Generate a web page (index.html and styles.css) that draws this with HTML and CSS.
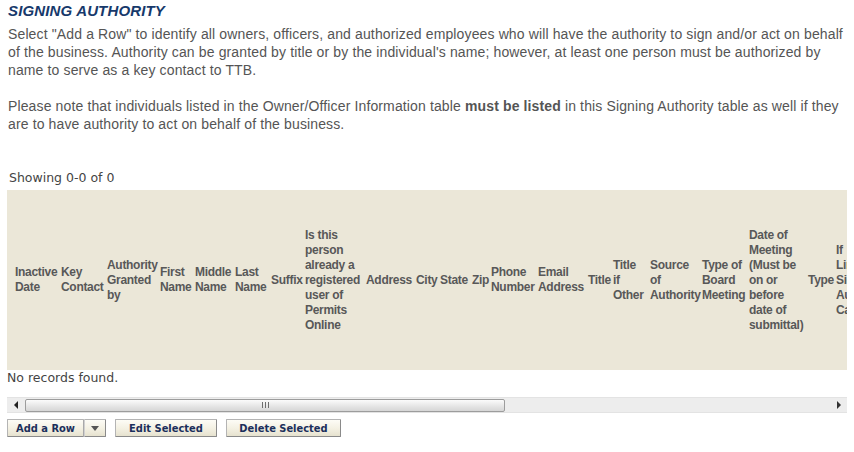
FILE: index.html
```html
<!DOCTYPE html>
<html lang="en">
<head>
<meta charset="utf-8">
<title>Signing Authority</title>
<link rel="stylesheet" href="styles.css">
</head>
<body>
<h2 class="title">SIGNING AUTHORITY</h2>
<p class="intro">Select "Add a Row" to identify all owners, officers, and authorized employees who will have the authority to sign and/or act on behalf of the business. Authority can be granted by title or by the individual's name; however, at least one person must be authorized by name to serve as a key contact to TTB.</p>
<p class="intro second">Please note that individuals listed in the Owner/Officer Information table <strong>must be listed</strong> in this Signing Authority table as well if they are to have authority to act on behalf of the business.</p>

<div class="grid">
  <div class="pager">Showing 0-0 of 0</div>
  <div class="grid-head">
    <table class="head-table">
      <colgroup>
        <col class="w46"><col class="w46"><col class="w53"><col class="w35"><col class="w40"><col class="w36"><col class="w34"><col class="w61"><col class="w50"><col class="w24"><col class="w32"><col class="w19"><col class="w47"><col class="w50"><col class="w25"><col class="w37"><col class="w52"><col class="w47"><col class="w59"><col class="w28"><col class="w80"><col class="w80">
      </colgroup>
      <tr>
        <th>Inactive<br>Date</th>
        <th>Key<br>Contact</th>
        <th>Authority<br>Granted<br>by</th>
        <th>First<br>Name</th>
        <th>Middle<br>Name</th>
        <th>Last<br>Name</th>
        <th>Suffix</th>
        <th>Is this<br>person<br>already a<br>registered<br>user of<br>Permits<br>Online</th>
        <th>Address</th>
        <th>City</th>
        <th>State</th>
        <th>Zip</th>
        <th>Phone<br>Number</th>
        <th>Email<br>Address</th>
        <th>Title</th>
        <th>Title<br>if<br>Other</th>
        <th>Source<br>of<br>Authority</th>
        <th>Type of<br>Board<br>Meeting</th>
        <th>Date of<br>Meeting<br>(Must be<br>on or<br>before<br>date of<br>submittal)</th>
        <th>Type</th>
        <th>If<br>Limited<br>Signing<br>Authority,<br>Capacity</th>
        <th>Status</th>
      </tr>
    </table>
  </div>
  <div class="empty">No records found.</div>
  <div class="hscroll">
    <div class="arrow-btn"><span class="tri-left"></span></div>
    <div class="track">
      <div class="thumb"><span class="grip"><i></i><i></i><i></i></span></div>
    </div>
    <div class="arrow-btn"><span class="tri-right"></span></div>
  </div>
</div>

<div class="actions">
  <div class="split">
    <button class="btn main">Add a Row</button>
    <button class="btn drop"><span class="tri-down"></span></button>
  </div>
  <button class="btn wide-edit">Edit Selected</button>
  <button class="btn wide-del">Delete Selected</button>
</div>
</body>
</html>
```

FILE: styles.css
```css
html, body {
  margin: 0;
  padding: 0;
  background: #ffffff;
}

body {
  padding: 0 8px;
  font-family: "Liberation Sans", Arial, sans-serif;
  color: #555555;
}

.title {
  margin: 0;
  padding-top: 2px;
  font-size: 15px;
  line-height: 18px;
  font-weight: bold;
  font-style: italic;
  letter-spacing: 0.15px;
  color: #17396b;
}

.intro {
  margin: 5px 0 0;
  font-size: 14px;
  line-height: 18px;
  letter-spacing: 0.13px;
}

.intro.second {
  margin-top: 18px;
}

.intro strong {
  font-weight: bold;
}

.grid {
  margin: 37px 0 0 -1px;
  width: 840px;
}

.pager {
  padding-left: 2px;
  font-family: "DejaVu Sans", Verdana, sans-serif;
  font-size: 12.5px;
  line-height: 15px;
  color: #444444;
}

.grid-head {
  margin-top: 5px;
  height: 180px;
  background: #ebe7d8;
  overflow: hidden;
  padding-left: 8px;
}

.head-table {
  table-layout: fixed;
  border-collapse: collapse;
  border-spacing: 0;
  width: 981px;
  height: 180px;
}

.head-table th {
  padding: 0;
  text-align: left;
  vertical-align: middle;
  white-space: nowrap;
  overflow: visible;
  font-size: 12px;
  line-height: 15px;
  font-weight: bold;
  letter-spacing: -0.3px;
  color: #585858;
}

.w19 { width: 19px; }
.w24 { width: 24px; }
.w25 { width: 25px; }
.w28 { width: 28px; }
.w32 { width: 32px; }
.w34 { width: 34px; }
.w35 { width: 35px; }
.w36 { width: 36px; }
.w37 { width: 37px; }
.w40 { width: 40px; }
.w46 { width: 46px; }
.w47 { width: 47px; }
.w50 { width: 50px; }
.w52 { width: 52px; }
.w53 { width: 53px; }
.w59 { width: 59px; }
.w61 { width: 61px; }
.w80 { width: 80px; }

.empty {
  font-family: "DejaVu Sans", Verdana, sans-serif;
  font-size: 12.5px;
  line-height: 15px;
  color: #444444;
}

.hscroll {
  margin-top: 12px;
  height: 16px;
  display: flex;
  align-items: stretch;
  background: #ededed;
  border-top: 1px solid #e3e3e3;
  border-bottom: 1px solid #e3e3e3;
  box-sizing: border-box;
}

.arrow-btn {
  width: 17px;
  display: flex;
  align-items: center;
  justify-content: center;
  flex: none;
}

.tri-left {
  width: 0;
  height: 0;
  border-top: 4px solid transparent;
  border-bottom: 4px solid transparent;
  border-right: 4px solid #222222;
}

.tri-right {
  width: 0;
  height: 0;
  border-top: 4px solid transparent;
  border-bottom: 4px solid transparent;
  border-left: 4px solid #333333;
}

.track {
  flex: 1;
  display: flex;
  align-items: center;
  padding-left: 1px;
}

.thumb {
  width: 480px;
  height: 13px;
  box-sizing: border-box;
  border: 1px solid #9c9c9c;
  border-radius: 2px;
  background: linear-gradient(#fbfbfb, #e4e4e4 60%, #d6d6d6);
  display: flex;
  align-items: center;
  justify-content: center;
}

.grip {
  display: flex;
  gap: 2px;
}

.grip i {
  display: block;
  width: 1px;
  height: 6px;
  background: #6e6e6e;
}

.actions {
  margin: 6px 0 0 -1px;
  display: flex;
  gap: 9px;
}

.btn {
  margin: 0;
  height: 18px;
  box-sizing: border-box;
  padding: 0;
  font-family: "DejaVu Sans Condensed", "DejaVu Sans", Verdana, sans-serif;
  font-size: 11px;
  line-height: 15px;
  font-weight: bold;
  color: #1b2f5b;
  background: linear-gradient(#fdfcf6, #f3f0e2 55%, #e6e2cf);
  border: 1px solid #b4b4b4;
  border-right-color: #8a8a8a;
  border-bottom-color: #8a8a8a;
  border-radius: 1px;
  cursor: pointer;
}

.split {
  display: flex;
}

.btn.main {
  width: 77px;
  border-right: 1px solid #a9a9a9;
}

.btn.drop {
  width: 22px;
  border-left: 1px solid #d0d0d0;
  display: flex;
  align-items: center;
  justify-content: center;
}

.tri-down {
  width: 0;
  height: 0;
  border-left: 4px solid transparent;
  border-right: 4px solid transparent;
  border-top: 5px solid #555555;
}

.btn.wide-edit {
  width: 102px;
}

.btn.wide-del {
  width: 115px;
}
```
